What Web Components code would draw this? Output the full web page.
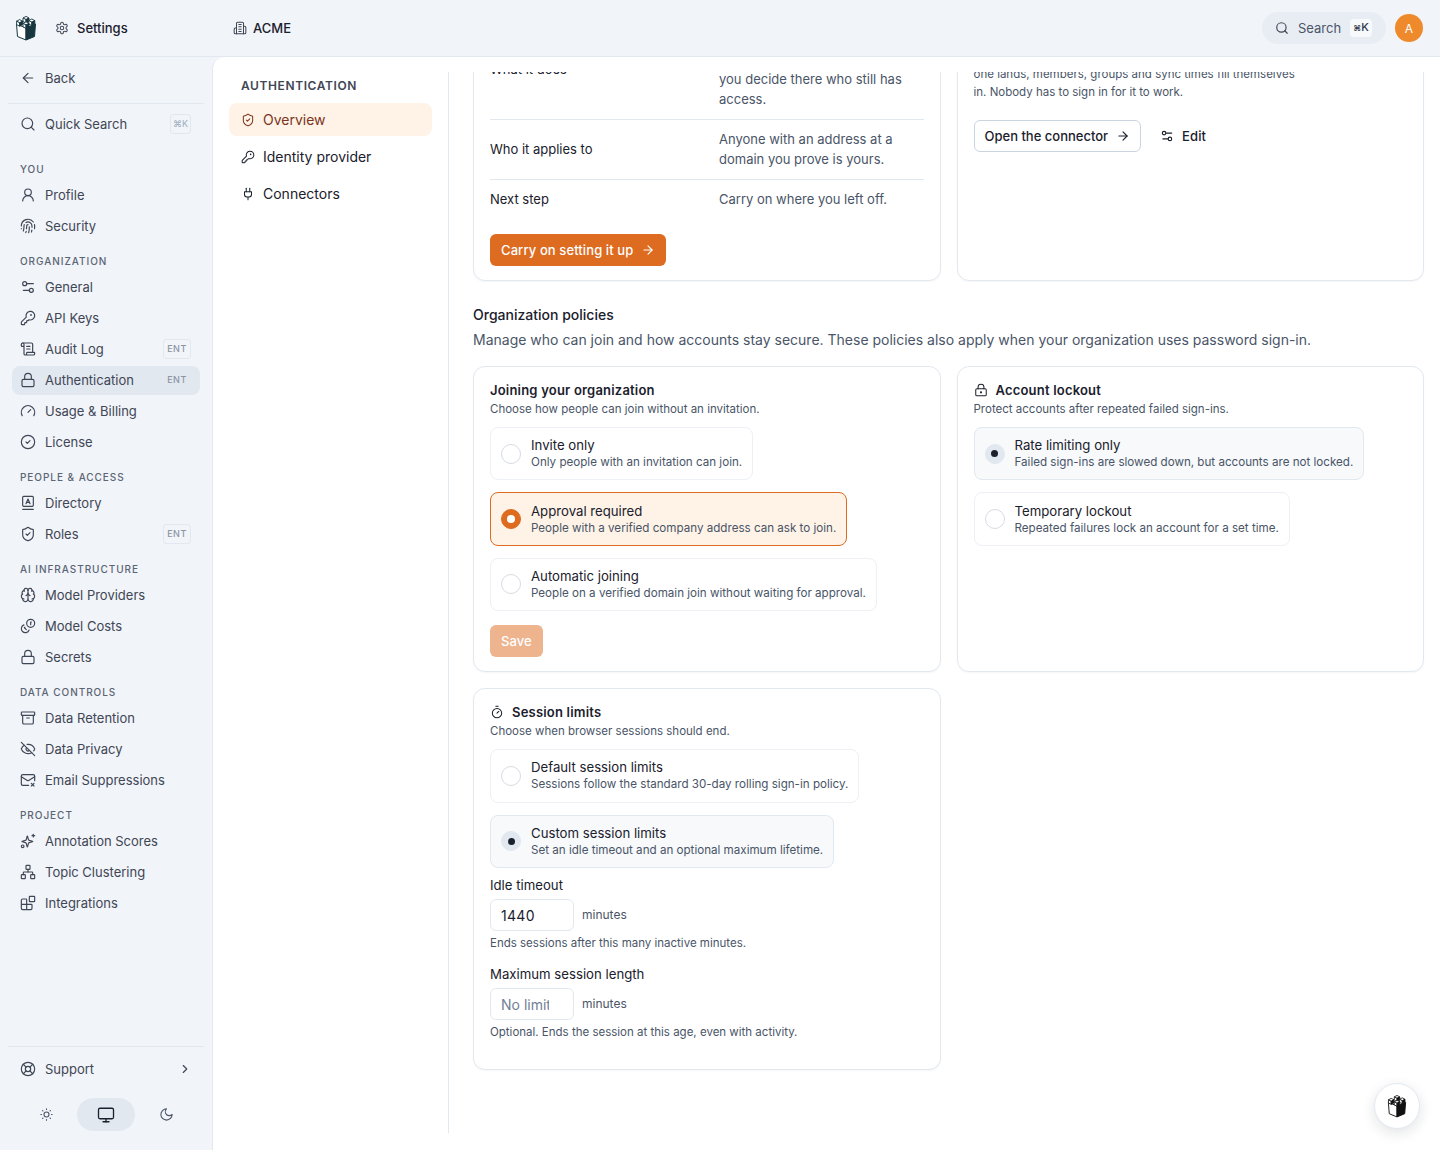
<!DOCTYPE html>
<html lang="en">
<head>
<meta charset="utf-8">
<title>Settings</title>
<style>
html,body{margin:0;padding:0;height:100%;background:#f1f4f9;font-family:Inter,"Liberation Sans",sans-serif;color:#1a202c;overflow:hidden}
</style>
</head>
<body>
<app-shell>
  <top-bar slot="top"></top-bar>
  <side-bar slot="side">
    <side-item icon="arrow-left">Back</side-item>
    <side-rule></side-rule>
    <side-item icon="search" kbd="⌘K">Quick Search</side-item>
    <side-heading first>YOU</side-heading>
    <side-item icon="user-round">Profile</side-item>
    <side-item icon="fingerprint">Security</side-item>
    <side-heading>ORGANIZATION</side-heading>
    <side-item icon="settings-2">General</side-item>
    <side-item icon="key-round">API Keys</side-item>
    <side-item icon="scroll-text" badge="ENT">Audit Log</side-item>
    <side-item icon="lock" badge="ENT" active>Authentication</side-item>
    <side-item icon="gauge">Usage &amp; Billing</side-item>
    <side-item icon="circle-check">License</side-item>
    <side-heading>PEOPLE &amp; ACCESS</side-heading>
    <side-item icon="directory">Directory</side-item>
    <side-item icon="shield-check" badge="ENT">Roles</side-item>
    <side-heading>AI INFRASTRUCTURE</side-heading>
    <side-item icon="brain">Model Providers</side-item>
    <side-item icon="coins">Model Costs</side-item>
    <side-item icon="lock">Secrets</side-item>
    <side-heading>DATA CONTROLS</side-heading>
    <side-item icon="archive">Data Retention</side-item>
    <side-item icon="eye-off">Data Privacy</side-item>
    <side-item icon="mail-x">Email Suppressions</side-item>
    <side-heading>PROJECT</side-heading>
    <side-item icon="sparkle">Annotation Scores</side-item>
    <side-item icon="network">Topic Clustering</side-item>
    <side-item icon="blocks">Integrations</side-item>
    <side-foot slot="foot"></side-foot>
  </side-bar>
  <auth-nav slot="nav"></auth-nav>
  <scroll-pane slot="main">
    <card-grid>
      <info-card>
        <info-row label="What it does"><br><br>you decide there who still has<br>access.</info-row>
        <info-row label="Who it applies to">Anyone with an address at a<br>domain you prove is yours.</info-row>
        <info-row label="Next step" last>Carry on where you left off.</info-row>
        <action-button kind="primary" after="arrow-right" style="margin-top:15px">Carry on setting it up</action-button>
      </info-card>
      <info-card>
        <muted-text style="margin-top:45px">one lands, members, groups and sync times fill themselves<br>in. Nobody has to sign in for it to work.</muted-text>
        <button-row>
          <action-button kind="outline" after="arrow-right">Open the connector</action-button>
          <action-button kind="ghost" before="settings-2">Edit</action-button>
        </button-row>
      </info-card>
    </card-grid>
    <section-intro title="Organization policies">Manage who can join and how accounts stay secure. These policies also apply when your organization uses password sign-in.</section-intro>
    <card-grid>
      <info-card heading="Joining your organization" sub="Choose how people can join without an invitation.">
        <choice-card title="Invite only">Only people with an invitation can join.</choice-card>
        <choice-card title="Approval required" state="accent">People with a verified company address can ask to join.</choice-card>
        <choice-card title="Automatic joining">People on a verified domain join without waiting for approval.</choice-card>
        <action-button kind="primary" disabled style="margin-top:14px">Save</action-button>
      </info-card>
      <info-card heading="Account lockout" icon="lock-keyhole" sub="Protect accounts after repeated failed sign-ins.">
        <choice-card title="Rate limiting only" state="neutral">Failed sign-ins are slowed down, but accounts are not locked.</choice-card>
        <choice-card title="Temporary lockout">Repeated failures lock an account for a set time.</choice-card>
      </info-card>
      <info-card heading="Session limits" icon="timer" sub="Choose when browser sessions should end." roomy>
        <choice-card title="Default session limits">Sessions follow the standard 30-day rolling sign-in policy.</choice-card>
        <choice-card title="Custom session limits" state="neutral">Set an idle timeout and an optional maximum lifetime.</choice-card>
        <minutes-field label="Idle timeout" value="1440" help="Ends sessions after this many inactive minutes." style="margin-top:8.2px"></minutes-field>
        <minutes-field label="Maximum session length" placeholder="No limit" help="Optional. Ends the session at this age, even with activity." style="margin-top:14px"></minutes-field>
      </info-card>
    </card-grid>
  </scroll-pane>
  <help-fab slot="fab"></help-fab>
</app-shell>

<script>
const ICONS = {
  'arrow-left':'<path d="m12 19-7-7 7-7"/><path d="M19 12H5"/>',
  'arrow-right':'<path d="M5 12h14"/><path d="m12 5 7 7-7 7"/>',
  'search':'<circle cx="11" cy="11" r="8"/><path d="m21 21-4.3-4.3"/>',
  'user-round':'<circle cx="12" cy="8" r="5"/><path d="M20 21a8 8 0 0 0-16 0"/>',
  'fingerprint':'<path d="M12 10a2 2 0 0 0-2 2c0 1.02-.1 2.51-.26 4"/><path d="M14 13.12c0 2.38 0 6.38-1 8.88"/><path d="M17.29 21.02c.12-.6.43-2.3.5-3.02"/><path d="M2 12a10 10 0 0 1 18-6"/><path d="M2 16h.01"/><path d="M21.8 16c.2-2 .131-5.354 0-6"/><path d="M5 19.5C5.5 18 6 15 6 12a6 6 0 0 1 .34-2"/><path d="M8.65 22c.21-.66.45-1.32.57-2"/><path d="M9 6.8a6 6 0 0 1 9 5.2v2"/>',
  'settings-2':'<path d="M20 7h-9"/><path d="M14 17H5"/><circle cx="17" cy="17" r="3"/><circle cx="7" cy="7" r="3"/>',
  'key-round':'<path d="M2.586 17.414A2 2 0 0 0 2 18.828V21a1 1 0 0 0 1 1h3a1 1 0 0 0 1-1v-1a1 1 0 0 1 1-1h1a1 1 0 0 0 1-1v-1a1 1 0 0 1 1-1h.172a2 2 0 0 0 1.414-.586l.814-.814a6.5 6.5 0 1 0-4-4z"/><circle cx="16.5" cy="7.5" r=".5" fill="currentColor"/>',
  'scroll-text':'<path d="M15 12h-5"/><path d="M15 8h-5"/><path d="M19 17V5a2 2 0 0 0-2-2H4"/><path d="M8 21h12a2 2 0 0 0 2-2v-1a1 1 0 0 0-1-1H11a1 1 0 0 0-1 1v1a2 2 0 1 1-4 0V5a2 2 0 1 0-4 0v2a1 1 0 0 0 1 1h3"/>',
  'lock':'<rect x="3" y="11" width="18" height="11" rx="2"/><path d="M7 11V7a5 5 0 0 1 10 0v4"/>',
  'lock-keyhole':'<circle cx="12" cy="16" r="1"/><rect x="3" y="10" width="18" height="12" rx="2"/><path d="M7 10V7a5 5 0 0 1 10 0v3"/>',
  'gauge':'<path d="m12 14 4-4"/><path d="M3.34 19a10 10 0 1 1 17.32 0"/>',
  'circle-check':'<circle cx="12" cy="12" r="10"/><path d="m9 12 2 2 4-4"/>',
  'directory':'<rect x="4" y="2" width="16" height="15" rx="1.5"/><path d="M4 21.5h16"/><path d="m9 13 3-7 3 7"/><path d="M10 11h4"/>',
  'shield-check':'<path d="M20 13c0 5-3.5 7.5-7.66 8.95a1 1 0 0 1-.67-.01C7.5 20.5 4 18 4 13V6a1 1 0 0 1 1-1c2 0 4.5-1.2 6.24-2.72a1.17 1.17 0 0 1 1.52 0C14.51 3.81 17 5 19 5a1 1 0 0 1 1 1z"/><path d="m9 12 2 2 4-4"/>',
  'brain':'<path d="M12 18V5"/><path d="M15 13a4.17 4.17 0 0 1-3-4 4.17 4.17 0 0 1-3 4"/><path d="M17.598 6.5A3 3 0 1 0 12 5a3 3 0 1 0-5.598 1.5"/><path d="M17.997 5.125a4 4 0 0 1 2.526 5.77"/><path d="M18 18a4 4 0 0 0 2-7.464"/><path d="M19.967 17.483A4 4 0 1 1 12 18a4 4 0 1 1-7.967-.517"/><path d="M6 18a4 4 0 0 1-2-7.464"/><path d="M6.003 5.125a4 4 0 0 0-2.526 5.77"/>',
  'coins':'<g transform="matrix(-1 0 0 1 24 0)"><circle cx="8" cy="8" r="6"/><path d="M18.09 10.37A6 6 0 1 1 10.34 18"/><path d="M7 6h1v4"/><path d="m16.71 13.88.7.71-2.82 2.82"/></g>',
  'archive':'<rect x="2" y="3" width="20" height="5" rx="1"/><path d="M4 8v11a2 2 0 0 0 2 2h12a2 2 0 0 0 2-2V8"/><path d="M10 12h4"/>',
  'eye-off':'<path d="M10.733 5.076a10.744 10.744 0 0 1 11.205 6.575 1 1 0 0 1 0 .696 10.747 10.747 0 0 1-1.444 2.49"/><path d="M14.084 14.158a3 3 0 0 1-4.242-4.242"/><path d="M17.479 17.499a10.75 10.75 0 0 1-15.417-5.151 1 1 0 0 1 0-.696 10.75 10.75 0 0 1 4.446-5.143"/><path d="m2 2 20 20"/>',
  'mail-x':'<path d="M22 13V6a2 2 0 0 0-2-2H4a2 2 0 0 0-2 2v12c0 1.1.9 2 2 2h9"/><path d="m22 7-8.97 5.7a1.94 1.94 0 0 1-2.06 0L2 7"/><path d="m17 17 4 4"/><path d="m21 17-4 4"/>',
  'sparkle':'<g transform="translate(1.4 3.2) scale(.8)"><path stroke-width="2.2" d="M9.937 15.5A2 2 0 0 0 8.5 14.063l-6.135-1.582a.5.5 0 0 1 0-.962L8.5 9.936A2 2 0 0 0 9.937 8.5l1.582-6.135a.5.5 0 0 1 .963 0L14.063 8.5A2 2 0 0 0 15.5 9.937l6.135 1.581a.5.5 0 0 1 0 .964L15.5 14.063a2 2 0 0 0-1.437 1.437l-1.582 6.135a.5.5 0 0 1-.963 0z"/></g><path d="M20 2v4"/><path d="M22 4h-4"/><circle cx="4" cy="20" r="2"/>',
  'network':'<rect x="16" y="16" width="6" height="6" rx="1"/><rect x="2" y="16" width="6" height="6" rx="1"/><rect x="9" y="2" width="6" height="6" rx="1"/><path d="M5 16v-3a1 1 0 0 1 1-1h12a1 1 0 0 1 1 1v3"/><path d="M12 12V8"/>',
  'blocks':'<path d="M10 22V7a1 1 0 0 0-1-1H4a2 2 0 0 0-2 2v12a2 2 0 0 0 2 2h12a2 2 0 0 0 2-2v-5a1 1 0 0 0-1-1H2"/><rect x="14" y="2" width="8" height="8" rx="1"/>',
  'life-buoy':'<circle cx="12" cy="12" r="10"/><path d="m4.93 4.93 4.24 4.24"/><path d="m14.83 9.17 4.24-4.24"/><path d="m14.83 14.83 4.24 4.24"/><path d="m9.17 14.83-4.24 4.24"/><circle cx="12" cy="12" r="4"/>',
  'chevron-right':'<path d="m9 18 6-6-6-6"/>',
  'sun':'<circle cx="12" cy="12" r="4"/><path d="M12 3v1"/><path d="M12 20v1"/><path d="M3 12h1"/><path d="M20 12h1"/><path d="m18.364 5.636-.707.707"/><path d="m6.343 17.657-.707.707"/><path d="m5.636 5.636.707.707"/><path d="m17.657 17.657.707.707"/>',
  'monitor':'<rect x="2" y="3" width="20" height="14" rx="2"/><path d="M8 21h8"/><path d="M12 17v4"/>',
  'moon':'<path d="M12 3a6 6 0 0 0 9 9 9 9 0 1 1-9-9Z"/>',
  'settings':'<path d="M12.22 2h-.44a2 2 0 0 0-2 2v.18a2 2 0 0 1-1 1.73l-.43.25a2 2 0 0 1-2 0l-.15-.08a2 2 0 0 0-2.73.73l-.22.38a2 2 0 0 0 .73 2.73l.15.1a2 2 0 0 1 1 1.72v.51a2 2 0 0 1-1 1.74l-.15.09a2 2 0 0 0-.73 2.73l.22.38a2 2 0 0 0 2.73.73l.15-.08a2 2 0 0 1 2 0l.43.25a2 2 0 0 1 1 1.73V20a2 2 0 0 0 2 2h.44a2 2 0 0 0 2-2v-.18a2 2 0 0 1 1-1.73l.43-.25a2 2 0 0 1 2 0l.15.08a2 2 0 0 0 2.73-.73l.22-.39a2 2 0 0 0-.73-2.73l-.15-.08a2 2 0 0 1-1-1.74v-.5a2 2 0 0 1 1-1.74l.15-.09a2 2 0 0 0 .73-2.73l-.22-.38a2 2 0 0 0-2.73-.73l-.15.08a2 2 0 0 1-2 0l-.43-.25a2 2 0 0 1-1-1.73V4a2 2 0 0 0-2-2z"/><circle cx="12" cy="12" r="3"/>',
  'building':'<path d="M6 22V4a2 2 0 0 1 2-2h8a2 2 0 0 1 2 2v18Z"/><path d="M6 12H4a2 2 0 0 0-2 2v6a2 2 0 0 0 2 2h2"/><path d="M18 9h2a2 2 0 0 1 2 2v9a2 2 0 0 1-2 2h-2"/><path d="M10 6h4"/><path d="M10 10h4"/><path d="M10 14h4"/><path d="M10 18h4"/>',
  'plug':'<path d="M12 22v-5"/><path d="M9 8V2"/><path d="M15 8V2"/><path d="M18 8v5a4 4 0 0 1-4 4h-4a4 4 0 0 1-4-4V8Z"/>',
  'timer':'<line x1="10" x2="14" y1="2" y2="2"/><line x1="12" x2="15" y1="14" y2="11"/><circle cx="12" cy="14" r="8"/>'
};

class Base extends HTMLElement {
  connectedCallback(){
    if(this.shadowRoot) return;
    this.attachShadow({mode:'open'}).innerHTML = this.render();
  }
  attr(n,d=''){ return this.hasAttribute(n) ? this.getAttribute(n) : d; }
}
const ic = (name,size=16,sw=2)=>`<x-icon name="${name}" size="${size}" sw="${sw}"></x-icon>`;

customElements.define('x-icon', class extends Base {
  render(){
    const s=this.attr('size','16'), sw=this.attr('sw','2');
    return `<style>:host{display:inline-flex;flex:none;width:${s}px;height:${s}px}svg{display:block}</style>
    <svg xmlns="http://www.w3.org/2000/svg" width="${s}" height="${s}" viewBox="0 0 24 24" fill="none" stroke="currentColor" stroke-width="${sw}" stroke-linecap="round" stroke-linejoin="round">${ICONS[this.attr('name')]||''}</svg>`;
  }
});

customElements.define('tower-logo', class extends Base {
  render(){
    const dark=this.attr('dark','#17363f'), w=this.attr('w','22'), h=this.attr('h','26');
    const cube=(x,y)=>`<polygon points="${x-3},${y} ${x},${y-1.6} ${x+3},${y} ${x},${y+1.6}" fill="#fff" stroke="${dark}" stroke-width=".9"/><polygon points="${x-3},${y} ${x},${y+1.6} ${x},${y+5} ${x-3},${y+3.4}" fill="#fff" stroke="${dark}" stroke-width=".9"/><polygon points="${x+3},${y} ${x},${y+1.6} ${x},${y+5} ${x+3},${y+3.4}" fill="${dark}" stroke="${dark}" stroke-width=".9"/>`;
    return `<style>:host{display:inline-flex;flex:none}svg{display:block}</style>
    <svg xmlns="http://www.w3.org/2000/svg" width="${w}" height="${h}" viewBox="0 0 22 26">
      <polygon points="1.5,9 11,13 11,25 2.5,21.5" fill="#fff" stroke="${dark}" stroke-width="1" stroke-linejoin="round"/>
      <polygon points="11,13 20.5,9 19.5,21.5 11,25" fill="${dark}" stroke="${dark}" stroke-width="1" stroke-linejoin="round"/>
      ${cube(11,3)}${cube(16.8,5.6)}${cube(4.6,6.2)}${cube(11,8.4)}
    </svg>`;
  }
});

customElements.define('app-shell', class extends Base {
  render(){ return `<style>
    :host{display:grid;grid-template-columns:212px 1fr;grid-template-rows:57px 1fr;width:100%;height:100vh;overflow:hidden;background:#f1f4f9}
    .top{grid-column:1/3;grid-row:1}
    .side{grid-column:1;grid-row:2;min-height:0;display:flex}
    .panel{grid-column:2;grid-row:2;display:flex;min-height:0;background:#fff;border-left:1px solid #e2e8f0;border-top-left-radius:12px;padding:15px 0 17px;box-sizing:border-box}
  </style>
  <div class="top"><slot name="top"></slot></div>
  <div class="side"><slot name="side"></slot></div>
  <div class="panel"><slot name="nav"></slot><slot name="main"></slot></div>
  <slot name="fab"></slot>`; }
});

customElements.define('top-bar', class extends Base {
  render(){ return `<style>
    :host{display:flex;align-items:center;height:57px;box-sizing:border-box;border-bottom:1px solid #e2e8f0;padding:0 17px 0 15px;font-size:13px;font-weight:500;color:#1a202c}
    .logo{display:flex;width:40px}
    .crumb{display:flex;align-items:center;gap:8px}
    .crumb span{margin-top:-1px}
    .crumb x-icon{color:#3f4654}
    .a{width:178px}
    .org{gap:6px}
    .sp{flex:1}
    .search{display:flex;align-items:center;height:32px;width:124px;box-sizing:border-box;border-radius:16px;background:#e8edf3;padding:0 14px 0 13px;color:#4a5568;font-weight:400;gap:9px}
    .search kbd{font:500 11px Inter,"DejaVu Sans",sans-serif;background:#f7f9fb;border-radius:4px;width:23px;text-align:center;color:#2d3748;line-height:17px;white-space:nowrap}
    .search kbd small{font-size:8px}
    .search x-icon{color:#3f4654}
    .av{width:28px;height:28px;border-radius:50%;background:#ee8a2c;color:#fff;font-size:12px;font-weight:400;display:flex;align-items:center;justify-content:center;margin-left:9px}
  </style>
  <span class="logo"><tower-logo></tower-logo></span>
  <span class="crumb a">${ic('settings',14,1.75)}<span>Settings</span></span>
  <span class="crumb org">${ic('building',14,1.75)}<span>ACME</span></span>
  <span class="sp"></span>
  <span class="search">${ic('search',14,2)}<span>Search</span><kbd><small>⌘</small>K</kbd></span>
  <span class="av">A</span>`; }
});

customElements.define('side-bar', class extends Base {
  render(){ return `<style>
    :host{display:flex;flex-direction:column;width:212px;height:100%;box-sizing:border-box;padding:7px 12px 19px}
    .list{display:flex;flex-direction:column;flex:1;min-height:0}
  </style>
  <div class="list"><slot></slot></div>
  <slot name="foot"></slot>`; }
});

customElements.define('side-item', class extends Base {
  render(){
    const b=this.attr('badge'), k=this.attr('kbd'), act=this.hasAttribute('active');
    return `<style>
    :host{display:flex;align-items:center;box-sizing:border-box;height:29px;margin-bottom:2px;padding:0 9px 1px 8px;border-radius:8px;color:#3f4654;font-size:13px;gap:9px;flex:none;${act?'background:#e2e8f0;':''}}
    .t{flex:1;white-space:nowrap}
    .b{font-size:9px;font-weight:500;letter-spacing:.5px;color:#8b95a3;height:18px;line-height:18px;width:26px;text-align:center;border:${act?'1px solid transparent':'1px solid #e2e8f0'};border-radius:3px}
    .k{font:400 9px Inter,"DejaVu Sans",sans-serif;color:#a0aec0;height:18px;line-height:18px;width:19px;text-align:center;border:1px solid #e2e8f0;border-radius:3px}
    </style>${ic(this.attr('icon'),16,1.75)}<span class="t"><slot></slot></span>${b?`<span class="b">${b}</span>`:''}${k?`<span class="k">${k}</span>`:''}`;
  }
});

customElements.define('side-heading', class extends Base {
  render(){ return `<style>
    :host{display:block;flex:none;font-size:10px;font-weight:500;letter-spacing:.95px;line-height:14px;color:#5b6573;padding:${this.hasAttribute('first')?'21':'11'}px 8px 5px}
    </style><slot></slot>`; }
});

customElements.define('side-rule', class extends Base {
  render(){ return `<style>:host{display:block;flex:none;height:1px;background:#e2e8f0;margin:8px -4px 6px}</style>`; }
});

customElements.define('side-foot', class extends Base {
  render(){ return `<style>
    :host{display:block;flex:none;border-top:1px solid #e2e8f0;margin:0 -4px;padding:7px 4px 0}
    .row{display:flex;align-items:center;height:29px;padding:0 8px;color:#3f4654;font-size:13px;gap:9px}
    .row span{flex:1}
    .themes{display:flex;align-items:center;justify-content:center;margin-top:15px;height:33px;color:#4a5568}
    .th{width:62px;height:33px;display:flex;align-items:center;justify-content:center;border-radius:17px}
    .mid{width:58px;background:#e2e8f0;color:#1a202c}
  </style>
  <div class="row">${ic('life-buoy',16,1.75)}<span>Support</span>${ic('chevron-right',14,2)}</div>
  <div class="themes"><div class="th">${ic('sun',15,1.75)}</div><div class="th mid">${ic('monitor',18,1.75)}</div><div class="th">${ic('moon',15,1.75)}</div></div>`; }
});

customElements.define('auth-nav', class extends Base {
  render(){ return `<style>
    :host{display:flex;flex-direction:column;flex:none;width:236px;box-sizing:border-box;border-right:1px solid #e2e8f0;padding:5px 16px 0;gap:4px;color:#1a202c;font-size:14px}
    h2{margin:0 0 4px;padding:0 12px;font-size:12px;line-height:18px;font-weight:600;letter-spacing:.6px;color:#3f4654}
    a{display:flex;align-items:center;gap:8px;height:33px;padding:0 12px;border-radius:8px;color:inherit;text-decoration:none}
    a.on{background:#fef3e6;color:#7b341e}
  </style>
  <h2>AUTHENTICATION</h2>
  <a class="on">${ic('shield-check',14,1.75)}Overview</a>
  <a>${ic('key-round',14,1.75)}Identity provider</a>
  <a>${ic('plug',14,1.75)}Connectors</a>`; }
});

customElements.define('scroll-pane', class extends Base {
  render(){ return `<style>
    :host{display:block;flex:1;min-width:0;overflow:hidden}
    .in{padding:0 16px 90px 24px}
  </style><div class="in"><slot></slot></div>`; }
});

customElements.define('card-grid', class extends Base {
  render(){ return `<style>:host{display:grid;grid-template-columns:1fr 1fr;gap:16px}</style><slot></slot>`; }
});

customElements.define('info-card', class extends Base {
  render(){
    const h=this.attr('heading'), s=this.attr('sub'), i=this.attr('icon');
    return `<style>
    :host{display:flex;flex-direction:column;align-items:flex-start;box-sizing:border-box;border:1px solid #e2e8f0;border-radius:12px;padding:16px 16px 14px;background:#fff;box-shadow:0 1px 2px rgba(15,23,42,.04);${this.hasAttribute('roomy')?'padding-bottom:29px;':''}}
    .h{display:flex;align-items:center;gap:8px;font-size:13px;font-weight:600;line-height:14px;color:#1a202c;letter-spacing:.2px}
    .s{font-size:11.5px;line-height:16px;color:#4a5568;margin:4px 0 10px}
    </style>${h?`<div class="h">${i?ic(i,14,1.75):''}<span>${h}</span></div><div class="s">${s}</div>`:''}<slot></slot>`;
  }
});

customElements.define('info-row', class extends Base {
  render(){ return `<style>
    :host{display:grid;grid-template-columns:229px 1fr;align-items:center;align-self:stretch;font-size:13px;line-height:20px;padding:9px 0 10px;${this.hasAttribute('last')?'':'border-bottom:1px solid #e2e8f0;'}}
    .l{color:#1a202c}.v{color:#4a5568}
    </style><div class="l">${this.attr('label')}</div><div class="v"><slot></slot></div>`; }
});

customElements.define('muted-text', class extends Base {
  render(){ return `<style>:host{display:block;font-size:11.5px;line-height:18px;color:#4a5568;white-space:nowrap}</style><slot></slot>`; }
});

customElements.define('button-row', class extends Base {
  render(){ return `<style>:host{display:flex;align-items:center;gap:8px;margin-top:19px}</style><slot></slot>`; }
});

customElements.define('action-button', class extends Base {
  render(){
    const k=this.attr('kind','primary'), d=this.hasAttribute('disabled');
    const st={primary:'background:#dd6b20;color:#fff;border:0;padding:0 11px;letter-spacing:.1px;',
      outline:'background:#fff;color:#1a202c;border:1px solid #cbd5e0;padding:0 10px;box-sizing:border-box;',
      ghost:'background:transparent;color:#1a202c;border:0;padding:0 11px;letter-spacing:.1px;'}[k];
    const a=this.attr('after'), b=this.attr('before');
    return `<style>:host{display:inline-flex;align-items:center;gap:8px;height:32px;border-radius:6px;font-size:13px;font-weight:500;white-space:nowrap;${st}${d?'opacity:.5;':''}}</style>${b?ic(b,14,2):''}<slot></slot>${a?ic(a,14,2):''}`;
  }
});

customElements.define('section-intro', class extends Base {
  render(){ return `<style>
    :host{display:block;padding:24px 0 16px}
    h3{margin:0 0 5px;font-size:14px;line-height:20px;font-weight:500;color:#1a202c}
    p{margin:0;font-size:14px;line-height:20px;color:#4a5568;white-space:nowrap}
    </style><h3>${this.attr('title')}</h3><p><slot></slot></p>`; }
});

customElements.define('choice-card', class extends Base {
  render(){
    const s=this.attr('state');
    const host = s=='accent' ? 'background:#fef3e6;border-color:#dd6b20;' : s=='neutral' ? 'background:#f7f9fb;border-color:#e2e8f0;' : '';
    const dot = s=='accent' ? 'background:#dd6b20;border-color:#dd6b20;' : s=='neutral' ? 'background:#e2e8f0;border-color:#e2e8f0;' : '';
    const inner = s=='accent' ? '<i style="background:#fff;width:8px;height:8px"></i>' : s=='neutral' ? '<i style="background:#1a202c;width:7px;height:7px"></i>' : '';
    return `<style>
    :host{display:flex;align-items:center;gap:10px;box-sizing:border-box;height:53.4px;width:fit-content;margin-bottom:12px;padding:0 10px;border:1px solid #edf0f5;border-radius:8px;flex:none;${host}}
    :host(:last-of-type){margin-bottom:0}
    .r{width:20px;height:20px;box-sizing:border-box;border:1px solid #d5dbe4;border-radius:50%;display:flex;align-items:center;justify-content:center;flex:none;${dot}}
    i{display:block;border-radius:50%}
    .b{padding-bottom:1px}
    .t{font-size:13.2px;line-height:18px;color:#1a202c}
    .d{font-size:11.62px;line-height:16px;color:#4a5568;white-space:nowrap}
    </style><span class="r">${inner}</span><div class="b"><div class="t">${this.attr('title')}</div><div class="d"><slot></slot></div></div>`;
  }
});

customElements.define('minutes-field', class extends Base {
  render(){
    const v=this.attr('value'), p=this.attr('placeholder');
    return `<style>
    :host{display:block;align-self:stretch}
    .l{font-size:13.2px;line-height:18px;font-weight:400;color:#1a202c;margin-bottom:5px}
    .row{display:flex;align-items:center;gap:8px}
    .in{width:84px;height:32px;box-sizing:border-box;border:1px solid #e2e8f0;border-radius:6px;padding:0 10px;font-size:14px;line-height:31px;letter-spacing:.3px;overflow:hidden;color:#1a202c}
    .in span{display:block;width:47.5px;overflow:hidden;white-space:nowrap}
    .in .ph{color:#718096;letter-spacing:0}
    .u{font-size:12px;color:#4a5568;margin-top:-1px}
    .h{font-size:11.5px;line-height:16px;color:#4a5568;margin-top:4px}
    </style><div class="l">${this.attr('label')}</div><div class="row"><div class="in"><span class="${v?'':'ph'}">${v||p}</span></div><span class="u">minutes</span></div><div class="h">${this.attr('help')}</div>`;
  }
});

customElements.define('help-fab', class extends Base {
  render(){ return `<style>
    :host{position:fixed;right:20px;bottom:21px;width:46px;height:46px;box-sizing:border-box;border-radius:50%;background:#fff;border:1px solid #e2e8f0;box-shadow:0 4px 14px rgba(15,23,42,.12);display:flex;align-items:center;justify-content:center}
    </style><tower-logo dark="#111" w="20" h="24"></tower-logo>`; }
});

/* The reference shows this pane scrolled down a little. */
document.querySelector('scroll-pane').scrollTop = 69;
</script>
</body>
</html>
